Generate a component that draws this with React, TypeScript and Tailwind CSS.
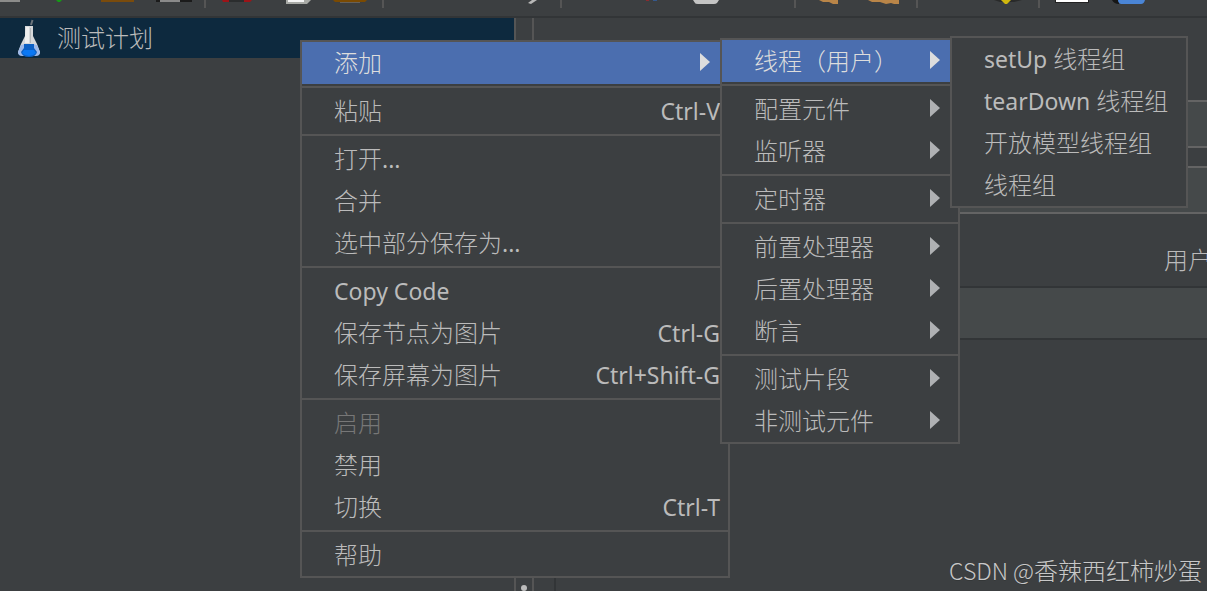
type Entry = {
    label: string
    shortcut?: string
    submenu?: boolean
    active?: boolean
    disabled?: boolean
}

const mainMenu: Entry[][] = [
    [{ label: '添加', submenu: true, active: true }],
    [{ label: '粘贴', shortcut: 'Ctrl-V' }],
    [{ label: '打开...' }, { label: '合并' }, { label: '选中部分保存为...' }],
    [
        { label: 'Copy Code' },
        { label: '保存节点为图片', shortcut: 'Ctrl-G' },
        { label: '保存屏幕为图片', shortcut: 'Ctrl+Shift-G' },
    ],
    [{ label: '启用', disabled: true }, { label: '禁用' }, { label: '切换', shortcut: 'Ctrl-T' }],
    [{ label: '帮助' }],
]

const addMenu: Entry[][] = [
    [{ label: '线程（用户）', submenu: true, active: true }],
    [{ label: '配置元件', submenu: true }, { label: '监听器', submenu: true }],
    [{ label: '定时器', submenu: true }],
    [
        { label: '前置处理器', submenu: true },
        { label: '后置处理器', submenu: true },
        { label: '断言', submenu: true },
    ],
    [{ label: '测试片段', submenu: true }, { label: '非测试元件', submenu: true }],
]

const threadMenu: Entry[][] = [
    [{ label: 'setUp 线程组' }, { label: 'tearDown 线程组' }, { label: '开放模型线程组' }, { label: '线程组' }],
]

// latin runs are a bit heavier and smaller than the chinese text
function Label({ text }: { text: string }) {
    return (
        <span className="whitespace-pre">
            {text.split(/([ -~]+)/).map((part, i) =>
                i % 2 ? (
                    <span key={i} className="text-[23px] font-normal">
                        {part}
                    </span>
                ) : (
                    part
                ),
            )}
        </span>
    )
}

function MenuItem({ label, shortcut, submenu, active, disabled }: Entry) {
    const color = active ? 'bg-[#4b6eaf] text-[#dddddd]' : disabled ? 'text-[#777777]' : 'text-[#bbbbbb]'
    return (
        <button
            type="button"
            role="menuitem"
            disabled={disabled}
            className={`flex h-[42px] w-full items-center justify-between pl-8 text-left whitespace-nowrap ${color} ${submenu ? 'pr-[18px]' : 'pr-2'}`}
        >
            <Label text={label} />
            {shortcut && <Label text={shortcut} />}
            {submenu && (
                <svg width="10" height="18" viewBox="0 0 10 18" className={active ? 'mb-0.5 fill-[#dddddd]' : 'mb-0.5 fill-[#afb1b3]'}>
                    <path d="M0 0L10 9L0 18Z" />
                </svg>
            )}
        </button>
    )
}

function Menu({ groups, className }: { groups: Entry[][]; className: string }) {
    return (
        <div role="menu" className={`absolute border-2 border-[#555555] bg-[#3c3f41] ${className}`}>
            {groups.map((group, i) => (
                <div key={i}>
                    {i > 0 && <hr className="my-0.5 border-t-2 border-[#555555]" />}
                    {group.map((entry) => (
                        <MenuItem key={entry.label} {...entry} />
                    ))}
                </div>
            ))}
        </div>
    )
}

function Flask() {
    return (
        <svg width="24" height="38" viewBox="0 0 24 38">
            <path d="M14 6L15.5 1" stroke="#6d757c" strokeWidth="2" />
            <path d="M8 7H16V17L20 25L23 33Q23 36 19 36H5Q1 36 1 33L4 25L8 17Z" fill="#d6d8da" />
            <path d="M9 8H12V24H8V18Z" fill="#efefef" />
            <path d="M13 9H14V24H13Z" fill="#b4b8bb" />
            <path d="M4 26L8 25H16L20 26L23 33Q23 37 19 37H5Q1 37 1 33Z" fill="#9db9ea" />
            <path d="M7 25H17V29L20 33Q19 38 12 38Q5 38 4 33L7 29Z" fill="#0c60c4" />
            <path d="M7 31H17L19 34Q16 37 12 37Q8 37 5 34Z" fill="#0a78f5" />
        </svg>
    )
}

function Toolbar() {
    return (
        <header className="h-[18px] shrink-0 border-b-2 border-[#323537]">
            <svg width="1207" height="8" viewBox="0 0 1207 8">
                <path
                    d="M204 0H206V8H204ZM382 0H384V8H382ZM560 0H562V8H560ZM794 0H796V8H794ZM916 0H918V8H916ZM1038 0H1040V8H1038Z"
                    fill="#555555"
                />
                <path d="M0 0H20V2H0Z" fill="#8c8c8a" />
                <path d="M56 0H62L60 2H58Z" fill="#159a15" />
                <path d="M101 0H134V2H101Z" fill="#7a4b0c" />
                <path d="M156 0H192V2H156Z" fill="#1b1b1b" />
                <path d="M160 0H180V2H160Z" fill="#8a8a8a" />
                <path d="M222 0H252L250 2H223Z" fill="#9c1418" />
                <path d="M229 0H244V2H229Z" fill="#2b2d2e" />
                <path d="M286 0H311L307 4H286Z" fill="#a8aaa6" />
                <path d="M288 0H304V2H288Z" fill="#f4f4f4" />
                <path d="M333 0H367L365 2H335Z" fill="#7a4a02" />
                <path d="M340 2H360V3H340Z" fill="#66615a" />
                <path d="M528 3L532 0H537L531 4Z" fill="#b8b8b8" />
                <path d="M646 0H649V1H646Z" fill="#8b2b30" />
                <path d="M653 0H657V1H653Z" fill="#35588c" />
                <path d="M693 0H719L717 3Q716 4 714 4H698Q695 4 695 3Z" fill="#c4c4c4" />
                <path d="M819 0H838V4H833L829 2H823Z" fill="#b98548" />
                <path d="M868 0H899V4H894L891 3L886 4L880 2H872Z" fill="#b98548" />
                <path d="M994 0H1022L1014 2H1000Z" fill="#292a2a" />
                <path d="M1001 0H1011L1007 4H1005Z" fill="#d0b80e" />
                <path d="M1055 0H1089V3H1055Z" fill="#222222" />
                <path d="M1056 0H1088V2H1056Z" fill="#ffffff" />
                <path d="M1112 0H1119V4Q1114 4 1112 0Z" fill="#161616" />
                <path d="M1118 0H1145Q1144 4 1141 4H1121Q1118 3 1118 0Z" fill="#4a85d6" />
            </svg>
        </header>
    )
}

export default function App() {
    return (
        <div className="relative flex h-screen flex-col overflow-hidden bg-[#3c3f41] font-['Noto_Sans','Noto_Sans_CJK_SC',sans-serif] text-[24px] leading-8 font-light text-[#bbbbbb]">
            <Toolbar />
            <main className="flex min-h-0 flex-1">
                <nav className="w-[514px] shrink-0">
                    <button type="button" className="flex h-10 w-full items-center gap-4 bg-[#0d293e] pl-[17px]">
                        <Flask />
                        <span>测试计划</span>
                    </button>
                </nav>
                <div className="flex w-5 shrink-0 items-end justify-center border-x-2 border-[#555555]">
                    <span className="size-1.5 rounded-full bg-[#bbbbbb]" />
                </div>
                <section className="flex min-w-0 flex-1 flex-col pt-[82px]">
                    <input aria-label="名称" className="h-12 w-full border-y-2 border-[#646464] bg-[#45494a]" />
                    <input aria-label="注释" className="mt-[18px] h-12 w-full border-y-2 border-[#646464] bg-[#45494a]" />
                    <h2 className="mt-[30px] mb-2.5 w-[43px] self-end overflow-hidden whitespace-nowrap">用户</h2>
                    <div className="ml-5 flex-1 border-l-2 border-[#323537]">
                        <div className="h-[54px] border-y-2 border-[#323537] bg-[#45494a]" />
                    </div>
                </section>
            </main>
            <Menu groups={mainMenu} className="top-10 left-[300px] w-[430px]" />
            <Menu groups={addMenu} className="top-[38px] left-[720px] w-60" />
            <Menu groups={threadMenu} className="top-9 left-[950px] w-[238px]" />
            <p className="absolute right-[5px] bottom-[5px] font-['Noto_Sans_CJK_SC',sans-serif] text-[#c8c8c8] text-shadow-2xs">
                <span className="text-[23px]">CSDN @</span>香辣西红柿炒蛋
            </p>
        </div>
    )
}
